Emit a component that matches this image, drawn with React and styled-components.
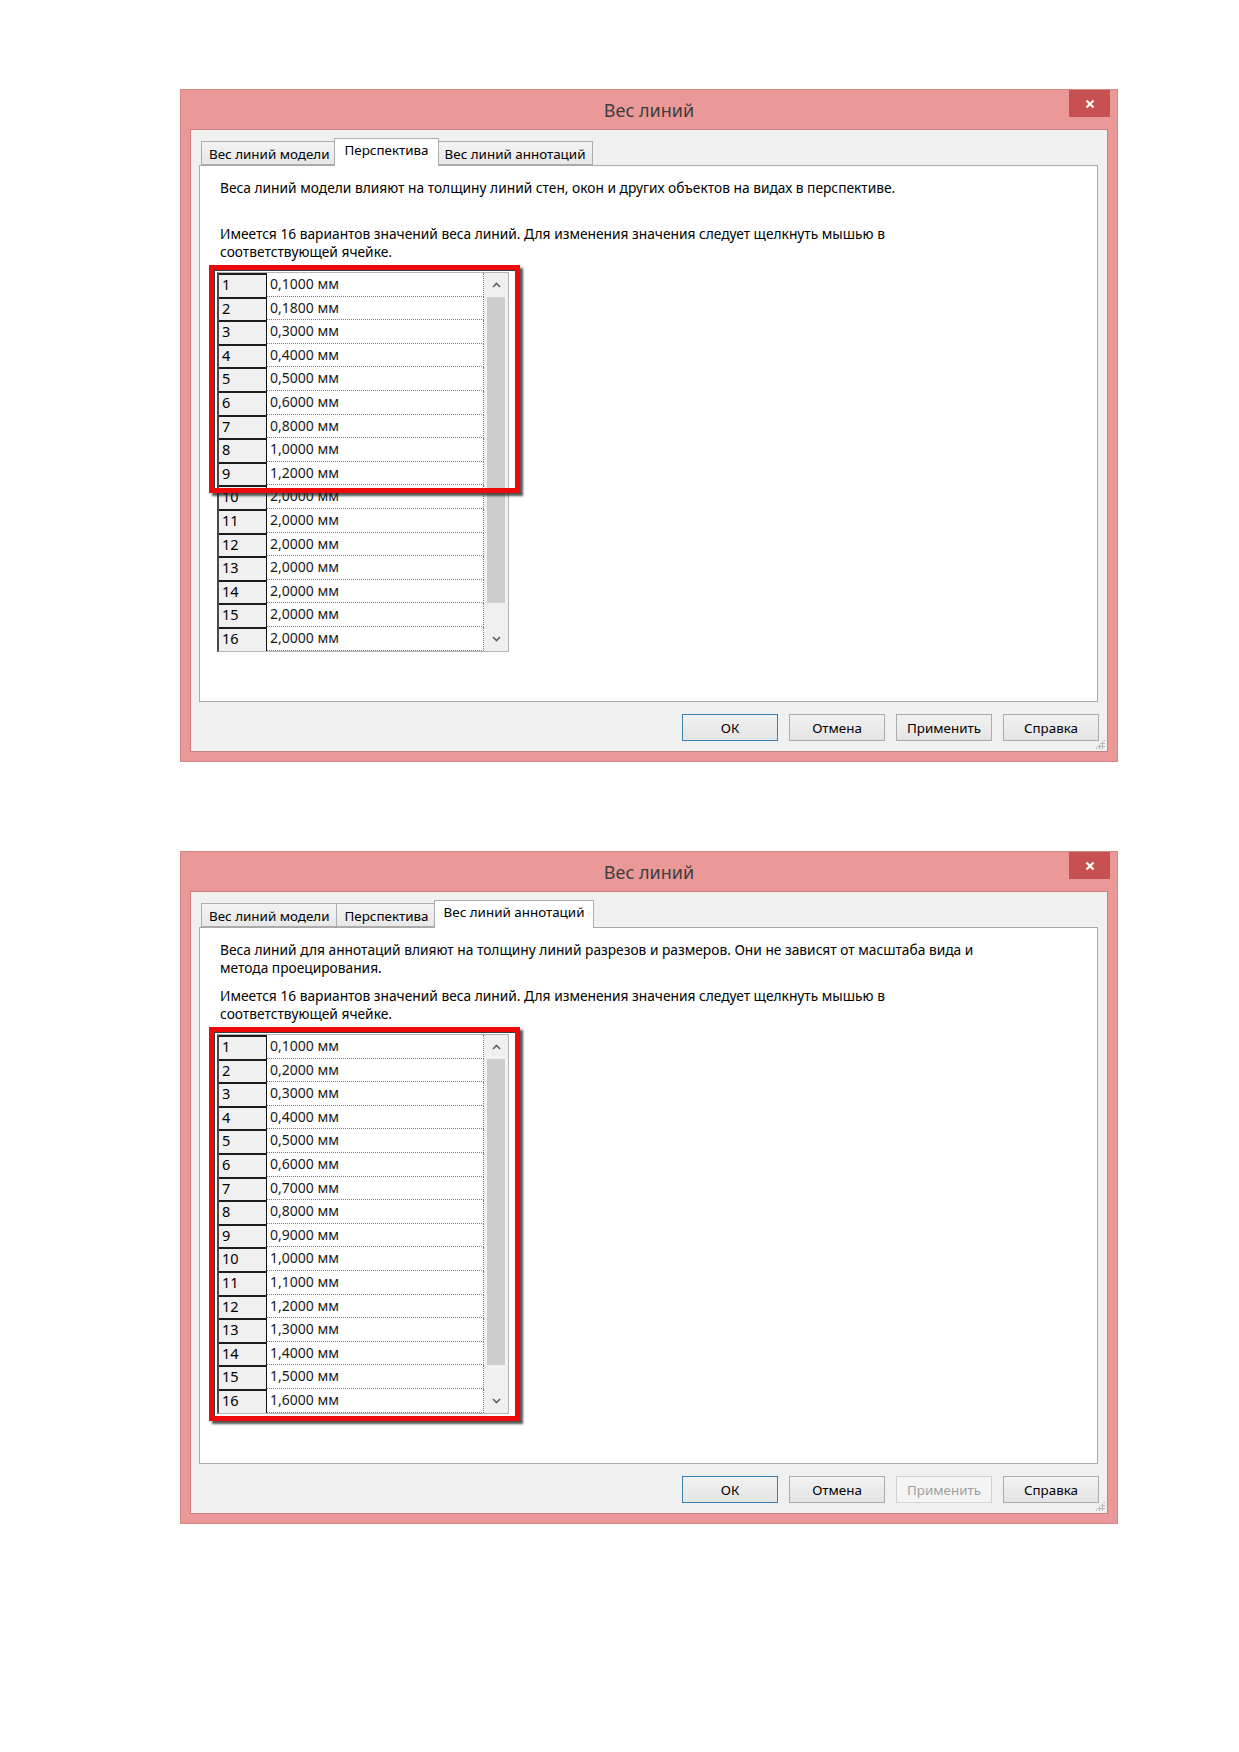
import React from 'react';
import styled, { createGlobalStyle } from 'styled-components';

const GlobalStyle = createGlobalStyle`
  html, body {
    margin: 0;
    padding: 0;
    background: #ffffff;
  }
  body {
    font-family: 'Noto Sans', 'Open Sans', sans-serif;
    color: #000;
  }
`;

const frame = '#ea9898';
const ROW_H = 23.6;

const Page = styled.div`
  min-height: 1752px;
  box-sizing: border-box;
  padding: 89px 0 0 180px;
  display: flex;
  flex-direction: column;
  gap: 89px;
`;

const Window = styled.div`
  width: 938px;
  height: 673px;
  box-sizing: border-box;
  background: ${frame};
  border: 1px solid #d78686;
  padding: 0 9px 9px 9px;
  display: flex;
  flex-direction: column;
`;

const TitleBar = styled.div`
  height: 39px;
  display: grid;
  grid-template-columns: 1fr auto 1fr;
  align-items: center;
`;

const Title = styled.div`
  grid-column: 2;
  font-size: 18px;
  color: #3d3d3d;
  padding-top: 1px;
`;

const CloseButton = styled.div`
  grid-column: 3;
  justify-self: end;
  align-self: start;
  width: 41px;
  height: 27px;
  margin-right: -2px;
  background: #c75050;
  display: flex;
  align-items: center;
  justify-content: center;
`;

const Client = styled.div`
  position: relative;
  flex: 1;
  background: #f0f0f0;
  border: 1px solid #c98080;
  padding: 8px 9px 0 8px;
  display: flex;
  flex-direction: column;
`;

const TabStrip = styled.div`
  height: 27px;
  display: flex;
  align-items: flex-end;
  padding-left: 2px;
  position: relative;
  z-index: 1;
`;

const Tab = styled.div`
  box-sizing: border-box;
  height: ${(p) => (p.$active ? '28px' : '24px')};
  padding: ${(p) => (p.$active ? '2px 9px 0' : '3px 7px 0')};
  margin: ${(p) => (p.$active ? '0 -2px -1px' : '0')};
  font-size: 13.4px;
  line-height: 18px;
  white-space: nowrap;
  background: ${(p) => (p.$active ? '#ffffff' : 'linear-gradient(#f3f3f3, #e8e8e8)')};
  border: 1px solid #adadad;
  border-bottom: ${(p) => (p.$active ? 'none' : '1px solid #adadad')};
  margin-right: ${(p) => (p.$active ? '-2px' : '-1px')};
  position: relative;
  z-index: ${(p) => (p.$active ? 2 : 1)};
`;

const Panel = styled.div`
  height: 537px;
  box-sizing: border-box;
  background: #ffffff;
  border: 1px solid #a9a9a9;
  padding: 13px 20px 0 17px;
`;

const Paragraph = styled.p`
  margin: 0 0 ${(p) => p.$gap || 0}px 3px;
  font-size: 13.75px;
  line-height: 17.5px;
  min-height: ${(p) => p.$lines * 17.5}px;
  white-space: nowrap;
`;

const TableWrap = styled.div`
  position: relative;
  width: 292px;
  margin-top: 12px;
`;

const Table = styled.div`
  display: flex;
  border: 1px solid #b5b5b5;
  border-left: 2px solid #4a4a4a;
  background: #ffffff;
`;

const Rows = styled.div`
  flex: 1;
  display: flex;
  flex-direction: column;
`;

const Row = styled.div`
  display: grid;
  grid-template-columns: 48px 1fr;
  height: ${ROW_H}px;
`;

const NumCell = styled.div`
  box-sizing: border-box;
  background: #f0f0f0;
  border-top: 2px solid #1c1c1c;
  border-right: 1px solid #111;
  font-size: 14.5px;
  line-height: 18px;
  padding-left: 3px;
`;

const ValueCell = styled.div`
  box-sizing: border-box;
  border-bottom: 1px dotted #7a7a7a;
  border-right: 1px dotted #7a7a7a;
  font-size: 14px;
  line-height: 21px;
  padding-left: 3px;
  color: #1a1a1a;
`;

const ScrollBar = styled.div`
  width: 24px;
  background: #f0f0f0;
  display: flex;
  flex-direction: column;
  align-items: center;
`;

const ArrowBox = styled.div`
  height: 24px;
  width: 100%;
  display: flex;
  align-items: center;
  justify-content: center;
`;

const Thumb = styled.div`
  width: 18px;
  height: 306px;
  background: #cdcdcd;
`;

const Track = styled.div`
  flex: 1;
`;

const Highlight = styled.div`
  position: absolute;
  left: -8px;
  top: -7px;
  width: 301px;
  height: ${(p) => p.$rows * ROW_H + 6}px;
  border: 5px solid #ee0a0a;
  box-shadow: 3px 3px 2px rgba(30, 30, 30, 0.75), inset 1px 1px 0 #3a3a3a;
  pointer-events: none;
`;

const ButtonRow = styled.div`
  display: flex;
  justify-content: flex-end;
  gap: 11px;
  margin-top: 12px;
  margin-right: -1px;
`;

const Button = styled.div`
  box-sizing: border-box;
  width: 96px;
  height: 27px;
  display: flex;
  align-items: center;
  justify-content: center;
  font-size: 13.4px;
  color: ${(p) => (p.$disabled ? '#a0a0a0' : '#000')};
  background: ${(p) => (p.$disabled ? '#f4f4f4' : 'linear-gradient(#f2f2f2, #e4e4e4)')};
  border: 1px solid ${(p) => (p.$default ? '#3c7fb1' : p.$disabled ? '#d3d3d3' : '#acacac')};
`;

const Grip = styled.div`
  position: absolute;
  right: 2px;
  bottom: 2px;
  width: 10px;
  height: 10px;
  background-image: radial-gradient(circle, #b5b5b5 1px, transparent 1.2px);
  background-size: 3px 3px;
  clip-path: polygon(100% 0, 100% 100%, 0 100%);
`;

const Chevron = ({ up }) => (
  <svg width="9" height="6" viewBox="0 0 9 6">
    <path
      d={up ? 'M1 5 L4.5 1.5 L8 5' : 'M1 1 L4.5 4.5 L8 1'}
      fill="none"
      stroke="#606060"
      strokeWidth="1.6"
    />
  </svg>
);

const CloseGlyph = () => (
  <svg width="10" height="10" viewBox="0 0 10 10">
    <path d="M1.5 1.5 L8.5 8.5 M8.5 1.5 L1.5 8.5" stroke="#ffffff" strokeWidth="2.2" />
  </svg>
);

const tabs = ['Вес линий модели', 'Перспектива', 'Вес линий аннотаций'];

const WeightTable = ({ values, marked }) => (
  <TableWrap>
    <Table>
      <Rows>
        {values.map((v, i) => (
          <Row key={i}>
            <NumCell>{i + 1}</NumCell>
            <ValueCell>{v} мм</ValueCell>
          </Row>
        ))}
      </Rows>
      <ScrollBar>
        <ArrowBox>
          <Chevron up />
        </ArrowBox>
        <Thumb />
        <Track />
        <ArrowBox>
          <Chevron />
        </ArrowBox>
      </ScrollBar>
    </Table>
    <Highlight $rows={marked} />
  </TableWrap>
);

const LineWeightDialog = ({ activeTab, intro, values, marked, applyDisabled }) => (
  <Window>
    <TitleBar>
      <Title>Вес линий</Title>
      <CloseButton>
        <CloseGlyph />
      </CloseButton>
    </TitleBar>
    <Client>
      <TabStrip>
        {tabs.map((t, i) => (
          <Tab key={t} $active={i === activeTab}>
            {t}
          </Tab>
        ))}
      </TabStrip>
      <Panel>
        <Paragraph $lines={2} $gap={11}>
          {intro.map((line, i) => (
            <React.Fragment key={i}>
              {line}
              {i < intro.length - 1 && <br />}
            </React.Fragment>
          ))}
        </Paragraph>
        <Paragraph $lines={2}>
          Имеется 16 вариантов значений веса линий. Для изменения значения следует щелкнуть мышью в
          <br />
          соответствующей ячейке.
        </Paragraph>
        <WeightTable values={values} marked={marked} />
      </Panel>
      <ButtonRow>
        <Button $default>ОК</Button>
        <Button>Отмена</Button>
        <Button $disabled={applyDisabled}>Применить</Button>
        <Button>Справка</Button>
      </ButtonRow>
      <Grip />
    </Client>
  </Window>
);

const perspectiveValues = [
  '0,1000', '0,1800', '0,3000', '0,4000', '0,5000', '0,6000', '0,8000', '1,0000',
  '1,2000', '2,0000', '2,0000', '2,0000', '2,0000', '2,0000', '2,0000', '2,0000',
];

const annotationValues = Array.from({ length: 16 }, (_, i) =>
  ((i + 1) / 10).toFixed(4).replace('.', ',')
);

export default function App() {
  return (
    <>
      <GlobalStyle />
      <Page>
        <LineWeightDialog
          activeTab={1}
          intro={[
            'Веса линий модели влияют на толщину линий стен, окон и других объектов на видах в перспективе.',
          ]}
          values={perspectiveValues}
          marked={9}
        />
        <LineWeightDialog
          activeTab={2}
          intro={[
            'Веса линий для аннотаций влияют на толщину линий разрезов и размеров. Они не зависят от масштаба вида и',
            'метода проецирования.',
          ]}
          values={annotationValues}
          marked={16}
          applyDisabled
        />
      </Page>
    </>
  );
}
